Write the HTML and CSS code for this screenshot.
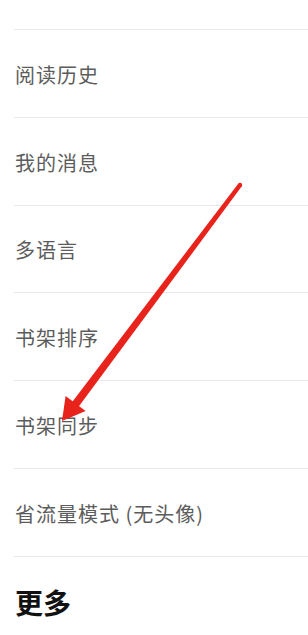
FILE: index.html
```html
<!DOCTYPE html>
<html lang="zh-CN">
<head>
    <meta charset="UTF-8">
    <meta name="viewport" content="width=device-width, initial-scale=1.0">
    <title>设置</title>
    <link rel="stylesheet" href="styles.css">
</head>
<body>
    <div class="page">
        <div class="menu">
            <div class="row row-top"></div>
            <div class="row">阅读历史</div>
            <div class="row">我的消息</div>
            <div class="row">多语言</div>
            <div class="row">书架排序</div>
            <div class="row">书架同步</div>
            <div class="row">省流量模式 (无头像)</div>
        </div>
        <h2 class="section-title">更多</h2>

        <svg class="arrow" width="308" height="635" viewBox="0 0 308 635">
            <circle cx="240" cy="185" r="2.2" fill="#e8231b"/>
            <polygon points="241.8,186.3 238.2,183.7 72,402.2 78.4,407" fill="#e8231b"/>
            <polygon points="62,421 65.6,396 85.6,411" fill="#e8231b"/>
        </svg>
    </div>
</body>
</html>
```

FILE: styles.css
```css
body { margin: 0; background: #fff; font-family: "Noto Sans CJK SC", "Noto Sans", sans-serif; }
.page { position: relative; width: 308px; height: 635px; overflow: hidden; }
.menu { display: flex; flex-direction: column; }
.row { box-sizing: border-box; height: 87.8px; margin-left: 14px; padding: 2px 0 0 1px; border-bottom: 1px solid #e8e8e8; display: flex; align-items: center; font-size: 20px; color: #5c5c5c; letter-spacing: 1px; }
.row-top { height: 30px; }
.section-title { margin: 26px 0 0 15px; font-size: 28px; font-weight: 700; color: #111; letter-spacing: 0; line-height: 1.4; }
.arrow { position: absolute; top: 0; left: 0; pointer-events: none; }
```
